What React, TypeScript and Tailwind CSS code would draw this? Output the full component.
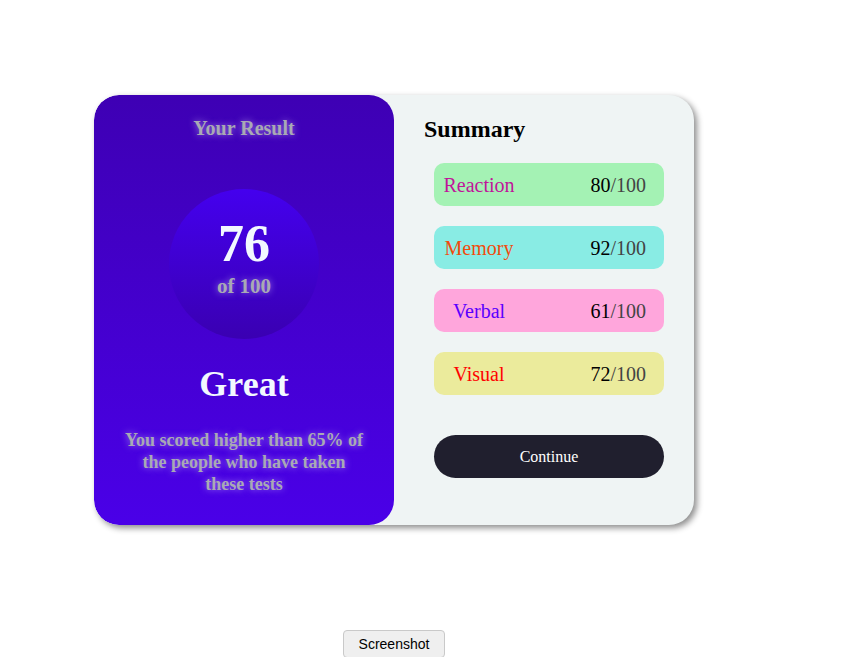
const rows = [
  { label: "Reaction", score: 80, bg: "bg-[#a4f2b4]", fg: "text-[#c0149a]" },
  { label: "Memory", score: 92, bg: "bg-[#89ece4]", fg: "text-[#f24b0c]" },
  { label: "Verbal", score: 61, bg: "bg-[#ffa6dc]", fg: "text-[#5a00ff]" },
  { label: "Visual", score: 72, bg: "bg-[#ebeb9c]", fg: "text-[#ff0000]" },
];

const glow = "text-[#a9a9b4] [text-shadow:0_0_7px_rgba(230,230,255,0.55)]";

export default function App() {
  return (
    <div className="min-h-screen bg-white pt-[95px] pl-[94px] font-['Liberation_Serif',serif]">
      <div className="w-[600px]">
        {/* Card */}
        <div className="flex h-[430px] rounded-[25px] overflow-hidden bg-[#eff4f4] shadow-[3px_3px_6px_rgba(0,0,0,0.45)]">
          {/* Left Result */}
          <div className="w-[300px] flex flex-col items-center bg-gradient-to-b from-[#3e00b4] to-[#4a00e8] rounded-[25px]">
            <h2 className={`mt-[21px] text-[20px] leading-[24px] font-bold ${glow}`}>Your Result</h2>
            <div className="mt-[49px] w-[150px] h-[150px] rounded-full bg-gradient-to-b from-[#4400ee] to-[#3a00b2] flex flex-col items-center justify-center pb-[12px]">
              <span className="text-[52px] leading-[52px] font-bold text-[#f2f8ff]">76</span>
              <span className={`mt-[4px] text-[21px] leading-[24px] font-bold ${glow}`}>of 100</span>
            </div>
            <h1 className="mt-[25px] text-[36px] leading-[40px] font-bold text-[#f2f8ff]">Great</h1>
            <p className={`mt-[25px] px-[28px] text-center text-[18px] leading-[22px] font-bold ${glow}`}>
              You scored higher than 65% of the people who have taken these tests
            </p>
          </div>

          {/* Right Summary */}
          <div className="flex-1 pt-[20px] pl-[30px]">
            <h2 className="text-[24px] leading-[28px] font-bold text-black">Summary</h2>
            <div className="mt-[20px] ml-[10px] w-[230px] flex flex-col gap-[20px]">
              {rows.map((r) => (
                <div key={r.label} className={`h-[43px] rounded-[10px] flex items-center justify-between pr-[18px] ${r.bg}`}>
                  <span className={`w-[90px] text-center text-[20px] ${r.fg}`}>{r.label}</span>
                  <span className="text-[20px] text-black">
                    {r.score}
                    <span className="text-[#444]">/100</span>
                  </span>
                </div>
              ))}
            </div>
            <button className="mt-[40px] ml-[10px] w-[230px] h-[43px] rounded-full bg-[#201f2e] text-white text-[16px]">
              Continue
            </button>
          </div>
        </div>

        <div className="flex justify-center mt-[105px]">
          <button className="h-[28px] px-[15px] rounded-[4px] border border-[#c9c9c9] bg-[#efefef] text-[14px] text-black font-['Liberation_Sans',sans-serif]">
            Screenshot
          </button>
        </div>
      </div>
    </div>
  );
}
